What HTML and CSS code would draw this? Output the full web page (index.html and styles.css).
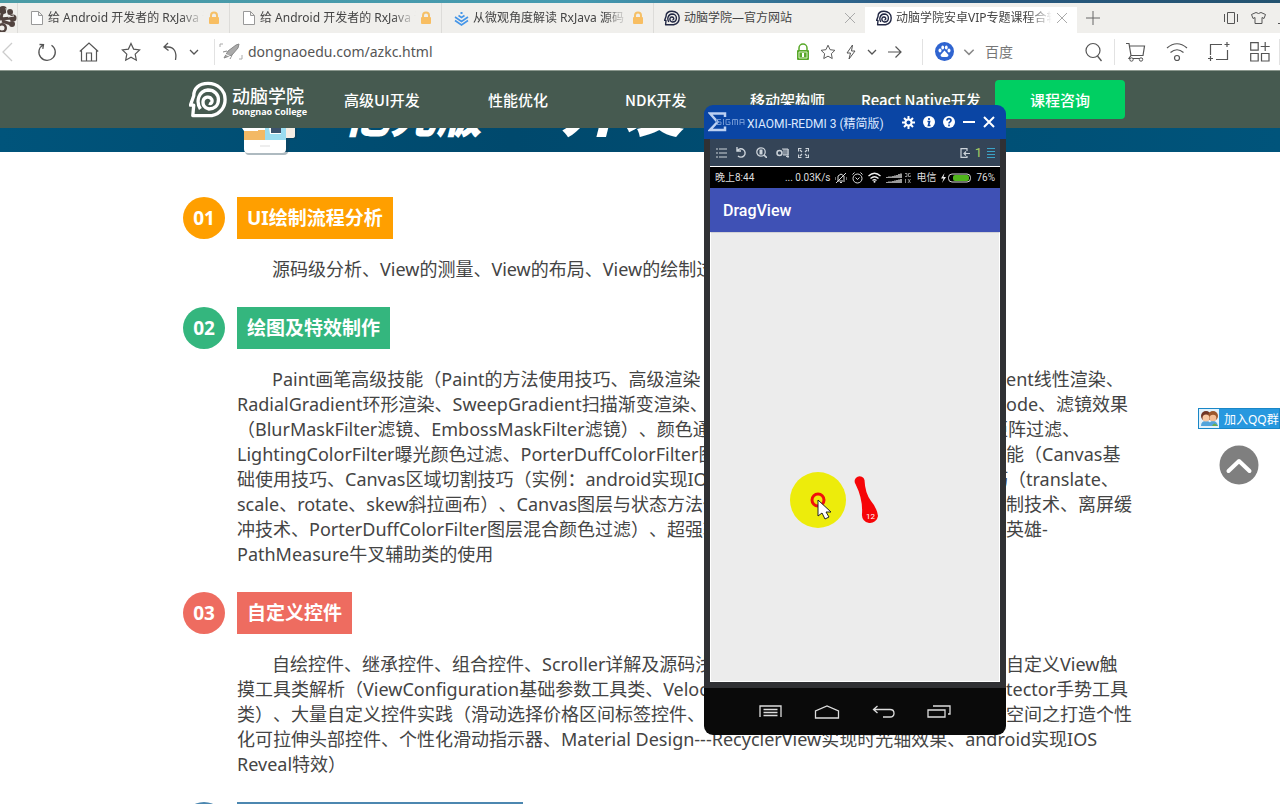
FILE: index.html
```html
<!DOCTYPE html>
<html lang="zh-CN">
<head>
<meta charset="utf-8">
<title>动脑学院安卓VIP专题课程合辑</title>
<link rel="stylesheet" href="styles.css">
</head>
<body>
<svg class="defs" aria-hidden="true">
  <symbol id="page" viewBox="0 0 14 16"><path d="M1.500 1.500h7l4 4v9h-11z M8.500 1.500v4h4" fill="#fff" stroke="#999"/></symbol>
  <symbol id="lock" viewBox="0 0 12 14"><path d="M3 7V4.500a3 3 0 0 1 6 0V7" fill="none" stroke="#f5c067" stroke-width="2"/><rect x="1" y="6" width="10" height="7" rx="1" fill="#f8be62"/></symbol>
  <symbol id="head" viewBox="0 0 40 38"><path d="M4 36h20c9-2 14-9 14-17C38 9 30 2 20 2 10 2 5 8 5 15L1.500 25h3.500zM12 29c-5-8-2-19 8-20 7 0 11 5 11 10 0 7-5 10-10 10-5-1-7-5-6-9 1-4 7-5 9-1 1 3-1 5-3 4" fill="none" stroke="currentColor" stroke-width="3.500" stroke-linejoin="round"/></symbol>
  <symbol id="close" viewBox="0 0 12 12"><path d="M1 1l10 10M11 1L1 11" stroke="currentColor" fill="none"/></symbol>
  <symbol id="down" viewBox="0 0 12 8"><path d="M2 2l4 4 4-4" stroke="currentColor" fill="none" stroke-width="1.300"/></symbol>
  <symbol id="star" viewBox="0 0 20 20"><path d="M10 1.500l2.600 5.600 6 .8-4.400 4.200 1.100 6.100-5.300-3-5.300 3 1.100-6.100L1.400 7.900l6-.8z" fill="none" stroke="currentColor" stroke-width="1.200"/></symbol>
</svg>

<div class="desktop-strip"></div>
<header class="browser">
  <div class="tabs">
    <svg class="clover" width="17" height="28" viewBox="0 0 17 28"><g fill="#51433f"><circle cx="3" cy="6" r="4"/><circle cx="10" cy="8" r="3"/><circle cx="13" cy="14" r="3.500"/><circle cx="12" cy="20" r="3"/><circle cx="2" cy="24" r="5"/></g><path d="M0 15l12-1M2 17l9 3M1 14l2-8" stroke="#51433f" stroke-width="3"/><circle cx="2" cy="24" r="2.500" fill="#f0efec"/><path d="M6 4l1 6-3 3M14 12l-6 1" stroke="#f0efec" fill="none"/></svg>
    <a class="tab" href="#"><svg width="14" height="16"><use href="#page"/></svg><span class="tab-title fade">给 Android 开发者的 RxJava 详解</span><svg width="12" height="14"><use href="#lock"/></svg></a>
    <a class="tab" href="#"><svg width="14" height="16"><use href="#page"/></svg><span class="tab-title fade">给 Android 开发者的 RxJava 详解</span><svg width="12" height="14"><use href="#lock"/></svg></a>
    <a class="tab" href="#"><svg width="15" height="15" viewBox="0 0 15 15"><path d="M1 6l6.500 4.500L14 6M1 9.500l6.500 4.500L14 9.500M4.500 4.500l3 2 3-2" fill="none" stroke="#4596e8" stroke-width="1.600"/><rect x="6.500" y="1" width="2" height="2" fill="#4596e8"/></svg><span class="tab-title fade">从微观角度解读 RxJava 源码</span><svg width="12" height="14"><use href="#lock"/></svg></a>
    <a class="tab" href="#"><svg class="navy" width="16" height="16"><use href="#head"/></svg><span class="tab-title">动脑学院—官方网站</span><svg class="x" width="12" height="12"><use href="#close"/></svg></a>
    <a class="tab active" href="#"><svg class="navy" width="16" height="16"><use href="#head"/></svg><span class="tab-title fade">动脑学院安卓VIP专题课程合辑</span><svg class="x" width="12" height="12"><use href="#close"/></svg></a>
    <button class="plain new-tab" aria-label="新建标签"><svg width="16" height="16" viewBox="0 0 16 16"><path d="M8 1v14M1 8h14" stroke="#666"/></svg></button>
    <div class="window-tools">
      <svg width="16" height="14" viewBox="0 0 16 14"><path d="M4.500 1.500h7v11h-7zM1.500 3v8M14.500 3v8" fill="none" stroke="#555"/></svg>
      <svg width="17" height="14" viewBox="0 0 17 14"><path d="M6 1.500q2.500 2 5 0l4.500 2-1.500 4-2-1v6H5v-6l-2 1-1.500-4z" fill="none" stroke="#555"/></svg>
      <svg width="2" height="14" viewBox="0 0 2 14"><path d="M0 12.500h2" stroke="#555"/></svg>
    </div>
  </div>
  <div class="toolbar">
    <button class="plain back" aria-label="后退"><svg width="14" height="20" viewBox="0 0 14 20"><path d="M12 1L3 10l9 9" fill="none" stroke="#ccc" stroke-width="1.300"/></svg></button>
    <button class="plain tool" aria-label="刷新"><svg width="20" height="20" viewBox="0 0 20 20"><path d="M6 3a8.200 8.200 0 1 0 8.500.2M2.500 2.500L6.500 2.700 5.800 6.800" fill="none" stroke="#555" stroke-width="1.300"/></svg></button>
    <button class="plain tool" aria-label="主页"><svg width="20" height="20" viewBox="0 0 20 20"><path d="M.8 9.500L10 1l9.200 8.500M2.500 8.500v10.500h15V8.500M7.500 19v-8h5v8" fill="none" stroke="#555" stroke-width="1.200"/></svg></button>
    <button class="plain tool" aria-label="收藏"><svg width="20" height="20"><use href="#star"/></svg></button>
    <button class="plain tool undo" aria-label="撤销"><svg width="15" height="20" viewBox="0 0 15 20"><path d="M5 1L1 5l4.500 3.500M1 5h4c6 0 9 5 7.500 13" fill="none" stroke="#555" stroke-width="1.300"/></svg></button>
    <button class="plain" aria-label="更多"><svg width="12" height="8"><use href="#down"/></svg></button>
    <i class="rule first"></i>
    <svg width="24" height="18" viewBox="0 0 24 18"><path d="M1 4V1h3M20 16h3v-4" fill="none" stroke="#aaa"/><path d="M5 15l4-7 8-6 3-1-1 4-6 7zM8 8l-4 1M13 12l-2 4" fill="#aaa" stroke="#888"/><path d="M6 11l6 3" stroke="#fff"/></svg>
    <input class="url" type="text" aria-label="网址" value="dongnaoedu.com/azkc.html">
    <div class="url-tools">
      <svg width="14" height="18" viewBox="0 0 14 18"><path d="M3 8V5a4 4 0 0 1 8 0v3" fill="none" stroke="#58a829" stroke-width="1.500"/><rect x="1" y="7" width="12" height="10" rx="1" fill="#58a829"/><path d="M3 9h8v6H3z" fill="none" stroke="#d5efbf"/><path d="M7 10v4" stroke="#fff" stroke-width="2"/></svg>
      <svg width="16" height="16"><use href="#star"/></svg>
      <svg width="10" height="16" viewBox="0 0 10 16"><path d="M6.500 1L1 9h3.500L3 15l6-8H5.500z" fill="none" stroke="#555"/></svg>
      <svg width="12" height="8"><use href="#down"/></svg>
      <svg width="14" height="14" viewBox="0 0 14 14"><path d="M0 7h13M7.500 1.500L13 7l-5.500 5.500" fill="none" stroke="#555" stroke-width="1.200"/></svg>
    </div>
    <i class="rule"></i>
    <svg class="baidu" width="19" height="19" viewBox="0 0 19 19"><circle cx="9.500" cy="9.500" r="9.500" fill="#2f64d0"/><g fill="#fff"><ellipse cx="5" cy="8.500" rx="1.500" ry="2"/><ellipse cx="7.700" cy="5.500" rx="1.400" ry="2"/><ellipse cx="11.300" cy="5.500" rx="1.400" ry="2"/><ellipse cx="14" cy="8.500" rx="1.500" ry="2"/><path d="M9.500 8.500l4 4.500q0 2-2 2h-4q-2 0-2-2z"/></g></svg>
    <svg class="grey" width="14" height="10"><use href="#down"/></svg>
    <input class="search" type="text" aria-label="搜索" placeholder="百度">
    <button class="plain" aria-label="搜索"><svg width="20" height="20" viewBox="0 0 20 20"><circle cx="9" cy="8.500" r="7" fill="none" stroke="#555" stroke-width="1.200"/><path d="M13.500 14l4 5" stroke="#555" stroke-width="1.300"/></svg></button>
    <i class="rule"></i>
    <div class="extras">
      <svg width="20" height="20" viewBox="0 0 20 20"><path d="M0 1.500h3l2 12h12l1.500-9.500H4M5 13.500l-2 3h14" fill="none" stroke="#555" stroke-width="1.200"/><circle cx="5.500" cy="17.500" r="1.700" fill="#fff" stroke="#555"/><circle cx="15" cy="17.500" r="1.700" fill="#fff" stroke="#555"/></svg>
      <svg width="22" height="20" viewBox="0 0 22 20"><path d="M1 6q10-8.500 20 0M4.500 10.500q6.500-5.500 13 0" fill="none" stroke="#555" stroke-width="1.200"/><circle cx="11" cy="16" r="2.500" fill="none" stroke="#555" stroke-width="1.200"/></svg>
      <svg width="22" height="20" viewBox="0 0 22 20"><path d="M2.500 13V2.500H14M19.500 8v9.500H8M16.500 2.500h5M19 0v5M0 16.500h5M2.500 14v5" fill="none" stroke="#555" stroke-width="1.200"/></svg>
      <svg width="20" height="20" viewBox="0 0 20 20"><path d="M.7.700h7.500v7.500H.7zM.7 11.500h7.500v7.500H.7zM11.500 11.500h7.500v7.500h-7.500zM15.200 0v9M10.700 4.500h9" fill="none" stroke="#555" stroke-width="1.200"/></svg>
    </div>
    <i class="rule"></i>
  </div>
</header>

<div class="page">
  <nav class="site-nav">
    <a class="logo" href="#"><svg width="38" height="37"><use href="#head"/></svg><span class="logo-text"><b>动脑学院</b><small>Dongnao College</small></span></a>
    <a class="n1" href="#">高级UI开发</a><a class="n2" href="#">性能优化</a><a class="n3" href="#">NDK开发</a><a class="n4" href="#">移动架构师</a><a class="n5" href="#">React Native开发</a>
    <button class="consult">课程咨询</button>
  </nav>
  <div class="banner">
    <svg width="60" height="28" viewBox="0 0 60 28"><path d="M3 3v20q0 4 4 4h35q4 0 5-5l1-11h7V0H3z" fill="#173a4a" opacity=".35"/><path d="M44 0h9v8q0 2-3 2h-6z" fill="#f6eee5"/><path d="M2 0h42v21q0 4-4 4H6q-4 0-4-4z" fill="#fff"/><path d="M2 2h21v10H2z" fill="#f3b965"/><path d="M23 0h21v12H23z" fill="#9bdcf0"/><path d="M0 0h16v3H2zM27 0h12v6H28z" fill="#fff"/><path d="M29 0h10v5H29z" fill="#3b526d"/><path d="M18 18h10" stroke="#ddd"/></svg>
    <b class="slogan">亿元版</b><b class="slogan">开发</b>
  </div>

  <main class="course">
    <section class="item orange">
      <span class="no">01</span><h2>UI绘制流程分析</h2>
      <p><span class="line indent"><span>源码级分析、View的测量、View的布局、View的绘制过程</span></span></p>
    </section>
    <section class="item green">
      <span class="no">02</span><h2>绘图及特效制作</h2>
      <p>
        <span class="line indent"><span>Paint画笔高级技能（Paint的方法使用技巧、高级渲染（Linear</span><span>ent线性渲染、</span></span>
        <span class="line"><span>RadialGradient环形渲染、SweepGradient扫描渐变渲染、Com</span><span>ode、滤镜效果</span></span>
        <span class="line early"><span>（BlurMaskFilter滤镜、EmbossMaskFilter滤镜）、颜色通道过滤</span><span>矩阵过滤、</span></span>
        <span class="line"><span>LightingColorFilter曝光颜色过滤、PorterDuffColorFilter图层</span><span>能（Canvas基</span></span>
        <span class="line early"><span>础使用技巧、Canvas区域切割技巧（实例：android实现IOS效果</span><span>巧（translate、</span></span>
        <span class="line"><span>scale、rotate、skew斜拉画布）、Canvas图层与状态方法使用</span><span>制技术、离屏缓</span></span>
        <span class="line"><span>冲技术、PorterDuffColorFilter图层混合颜色过滤）、超强辅助</span><span>英雄-</span></span>
        <span class="line">PathMeasure牛叉辅助类的使用</span>
      </p>
    </section>
    <section class="item red">
      <span class="no">03</span><h2>自定义控件</h2>
      <p>
        <span class="line indent"><span>自绘控件、继承控件、组合控件、Scroller详解及源码浅析</span><span>自定义View触</span></span>
        <span class="line"><span>摸工具类解析（ViewConfiguration基础参数工具类、Velocity</span><span>tector手势工具</span></span>
        <span class="line"><span>类）、大量自定义控件实践（滑动选择价格区间标签控件、热门</span><span>空间之打造个性</span></span>
        <span class="line">化可拉伸头部控件、个性化滑动指示器、Material Design---RecyclerView实现时光轴效果、android实现IOS</span>
        <span class="line">Reveal特效）</span>
      </p>
    </section>
    <section class="item blue"><span class="no">04</span><h2>动画框架与高级特效的实战开发</h2></section>
  </main>
</div>

<aside class="side">
  <a class="qq" href="#"><svg width="20" height="19" viewBox="0 0 20 19"><rect width="20" height="19" fill="#e4f2fb"/><path d="M2 17q0-5 5-5t5 5zM10 17q0-5 4-5t5 5z" fill="#53a4db"/><path d="M13 17q2-5 6 0z" fill="#69ad50"/><circle cx="7" cy="7" r="5" fill="#703626"/><circle cx="14" cy="7" r="5" fill="#9c572b"/><circle cx="7" cy="9" r="3.500" fill="#f8c9a5"/><circle cx="14" cy="9" r="3.300" fill="#f4be96"/></svg><span>加入QQ群</span></a>
  <button class="plain to-top" aria-label="返回顶部"><svg width="40" height="40" viewBox="0 0 40 40"><circle cx="20" cy="20" r="19.500" fill="#7f7f7f"/><path d="M9.500 26L20 16l10.500 10" fill="none" stroke="#fff" stroke-width="4" stroke-linecap="round" stroke-linejoin="round"/></svg></button>
</aside>

<div class="phone">
  <div class="phone-title">
    <svg width="37" height="20" viewBox="0 0 37 20"><path d="M17 5V1.500H2L9.500 10 2 18h15v-3.500" fill="none" stroke="#bcd0f2" stroke-width="2.500"/><path d="M13 7.500H8.500V10H13v2.500H8.500M15.500 7v6M22 7.500h-4v5h4V10h-2M24.500 13V7.500h5V13M27 7.500V13M32 13V7.500h4V13M32 10.500h4" fill="none" stroke="#6f96d4"/></svg>
    <span>XIAOMI-REDMI 3 (精简版)</span>
    <div class="phone-actions">
      <svg width="13" height="13" viewBox="0 0 13 13"><path d="M6.500 0v13M0 6.500h13M2 2l9 9M11 2l-9 9" stroke="#fff" stroke-width="2"/><circle cx="6.500" cy="6.500" r="4" fill="#fff"/><circle cx="6.500" cy="6.500" r="2" fill="#0a45a4"/></svg>
      <svg width="12" height="12" viewBox="0 0 12 12"><circle cx="6" cy="6" r="6" fill="#fff"/><path d="M6 2v2M4.500 5.500H6.500L5.500 9.500h2" fill="none" stroke="#0a45a4" stroke-width="1.700"/></svg>
      <svg width="12" height="12" viewBox="0 0 12 12"><circle cx="6" cy="6" r="6" fill="#fff"/><path d="M4 4.500c0-2.500 4-2.500 4 0C8 6 6 5.700 6 7.500M6 8.500v1.700" fill="none" stroke="#0a45a4" stroke-width="1.600"/></svg>
      <svg width="12" height="12" viewBox="0 0 12 12"><path d="M0 6h12" stroke="#fff" stroke-width="2"/></svg>
      <svg width="12" height="12" viewBox="0 0 12 12"><path d="M1 1l10 10M11 1L1 11" stroke="#fff" stroke-width="2"/></svg>
    </div>
  </div>
  <div class="phone-body">
    <div class="phone-tools">
      <svg width="11" height="10" viewBox="0 0 11 10"><path d="M3 1h8M3 5h8M3 9h8M0 1h2M0 5h2M0 9h2" stroke="#ccd3da" stroke-width="1.200"/></svg>
      <svg width="11" height="11" viewBox="0 0 11 11"><path d="M1 0v4h4M1.500 3.500A4.200 4.200 0 1 1 2 9" fill="none" stroke="#ccd3da" stroke-width="1.400"/></svg>
      <svg width="11" height="11" viewBox="0 0 11 11"><circle cx="5" cy="5" r="4.200" fill="none" stroke="#ccd3da" stroke-width="1.300"/><path d="M8 8l3 3" stroke="#ccd3da" stroke-width="1.600"/><path d="M3.500 2.500h3v5h-3z" fill="#ccd3da"/></svg>
      <svg width="13" height="10" viewBox="0 0 13 10"><circle cx="3.500" cy="5" r="2.500" fill="none" stroke="#ccd3da" stroke-width="1.500"/><path d="M6 1h6v6H7M8 1v6M10 1v6M10 8.500h3M12 1v9" fill="none" stroke="#ccd3da"/></svg>
      <svg width="11" height="10" viewBox="0 0 11 10"><path d="M.5 3.500v-3h3M7.500.5h3v3M10.500 6.500v3h-3M3.500 9.500h-3v-3M2 2l2 2M9 2L7 4M2 8l2-2M9 8L7 6" fill="none" stroke="#ccd3da" stroke-width="1.200"/></svg>
      <div class="tools-right"><svg width="10" height="10" viewBox="0 0 10 10"><path d="M7 3V.7H1v8.600h6V8M10 5.500H4M6 3.500L4 5.500l2 2" fill="none" stroke="#ccd3da" stroke-width="1.200"/></svg><b>1</b><svg width="8" height="10" viewBox="0 0 8 10"><path d="M0 .5h8M0 3.500h8M0 6.500h8M0 9.500h8" stroke="#3ba4c8"/></svg></div>
    </div>
    <div class="status">
      <span>晚上8:44</span>
      <div class="status-right">
        <span>... 0.03K/s</span>
        <svg width="12" height="12" viewBox="0 0 12 12"><path d="M3 8V4l3-2 3 2v4M2 9h8M5 10.500h2M1 11L11 1M0 5v3M12 5v3" fill="none" stroke="#ddd"/></svg>
        <svg width="11" height="12" viewBox="0 0 11 12"><circle cx="5.500" cy="6.500" r="4.500" fill="none" stroke="#ddd"/><path d="M.5 2.500l2-2M8.500.5l2 2M3.500 5.500l2 2 2-2" fill="none" stroke="#ddd"/></svg>
        <svg width="13" height="11" viewBox="0 0 13 11"><path d="M.5 4q6-5.500 12 0M2.500 6.500q4-3.500 8 0M4.500 8.500q2-1.700 4 0" fill="none" stroke="#eee" stroke-width="1.300"/><circle cx="6.500" cy="9.800" r="1" fill="#eee"/></svg>
        <svg width="25" height="10" viewBox="0 0 25 10"><path d="M1 5V4M3 5V3.500M5 5V3.500M7 5V3M9 5V2.500M11 5V2M13 5V1M15 5V.5M1 10V9M3 10V8.500M5 10V8.500M7 10V8M9 10V7.500M11 10V7M13 10V6.500M15 10V6" stroke="#eee" stroke-width="1.300"/><path d="M19 .5h2v3h-2M24.500.5h-2v3h2v-1M19.500 6v4M22 6l2.500 4M24.500 6L22 10" fill="none" stroke="#aaa" stroke-width=".8"/></svg>
        <span>电信</span>
        <svg width="30" height="10" viewBox="0 0 30 10"><path d="M3.500 0L0 5.500h2.500L1 10l4-6H2.500z" fill="#eee"/><rect x="7.500" y="1" width="22" height="8" rx="3.500" fill="none" stroke="#ddd"/><rect x="12" y="2" width="16" height="6" rx="2" fill="#50b51b"/></svg>
        <span>76%</span>
      </div>
    </div>
    <div class="appbar">DragView</div>
    <div class="canvas">
      <svg width="288" height="400" viewBox="0 0 288 400"><circle cx="107" cy="267" r="28" fill="#edec0b"/><circle cx="107" cy="267" r="6" fill="none" stroke="#f0100b" stroke-width="3"/><path d="M144.500 251Q152 266 151 281a8 8 0 0 0 16 2Q166 275 160 268 154 260 153.500 247a5 5 0 1 0-9 4z" fill="#f60508"/><text x="155" y="286" class="count">12</text><path d="M107 267v16l4-3 3 6 4-2-3-5h5z" fill="#fff" stroke="#222"/></svg>
    </div>
  </div>
  <div class="phone-keys">
    <svg width="23" height="13" viewBox="0 0 23 13"><path d="M1 12V1h21v11M4.500 4.500h14M4.500 7.500h14M4.500 10.500h14" fill="none" stroke="#ddd" stroke-width="1.300"/></svg>
    <svg width="26" height="14" viewBox="0 0 26 14"><path d="M1.500 13V6L13 1l11.500 5v7z" fill="none" stroke="#ddd" stroke-width="1.300"/></svg>
    <svg width="23" height="13" viewBox="0 0 23 13"><path d="M5.500 1L1.500 4.500l4 3.500M1.500 4.500H18q4 0 4 3.700T18 12h-7" fill="none" stroke="#ddd" stroke-width="1.300"/></svg>
    <svg width="24" height="13" viewBox="0 0 24 13"><path d="M1 5h17v7H1zM6 1h17v8h-2" fill="none" stroke="#ddd" stroke-width="1.300"/></svg>
  </div>
</div>
</body>
</html>
```
FILE: styles.css
```css
* { box-sizing: border-box; }
body {
  margin: 0;
  height: 100vh;
  display: flex;
  flex-direction: column;
  position: relative;
  overflow: hidden;
  background: #fff;
  color: #444;
  font-family: "Noto Sans", "Noto Sans CJK SC", sans-serif;
  text-spacing-trim: space-all;
}
a { color: inherit; text-decoration: none; }
svg { flex: none; display: block; }
.defs { position: absolute; width: 0; height: 0; }
.plain { border: 0; padding: 0; background: none; color: inherit; display: flex; align-items: center; justify-content: center; }

.desktop-strip { flex: none; height: 3px; background: linear-gradient(90deg, #4b9ba5, #459ab0 45%, #2a5b85 70%, #245370); }
.browser { flex: none; border-bottom: 1px solid #8b988e; }
.tabs { display: flex; height: 30px; background: #f0efec; }
.clover { align-self: center; }
.tab {
  flex: 0 0 212px;
  min-width: 0;
  display: flex;
  align-items: center;
  gap: 4px;
  padding: 0 9px 0 12px;
  border-left: 1px solid #dddcd9;
  font-size: 12px;
}
.tab .navy { margin-left: -2px; }
.tab.active { background: #fff; border: 0; margin-top: 4px; height: 26px; padding-left: 13px; padding-bottom: 4px; }
.tab-title { flex: 1; overflow: hidden; white-space: nowrap; line-height: 20px; }
.fade { -webkit-mask-image: linear-gradient(90deg, #000 85%, transparent); mask-image: linear-gradient(90deg, #000 85%, transparent); }
.navy { color: #222844; }
.x { color: #aaa; }
.new-tab { width: 32px; }
.window-tools { margin-left: auto; display: flex; align-items: center; gap: 11px; }

.toolbar { display: flex; align-items: center; height: 37px; background: #fff; color: #555; }
.back { width: 26px; justify-content: flex-start; }
.tool { width: 42px; height: 30px; }
.tool.undo { width: 36px; }
.rule { width: 1px; height: 26px; background: #e2e2e2; flex: none; }
.url, .search { min-width: 0; border: 0; outline: 0; background: none; padding: 0; font-family: inherit; font-size: 14px; color: #555; }
.url { flex: 1; margin-left: 5px; }
.url-tools { display: flex; align-items: center; gap: 10px; margin-right: 20px; }
.baidu { margin: 0 8px 0 12px; }
.grey { color: #888; margin-right: 9px; }
.search { width: 99px; }
.search::placeholder { color: #777; opacity: 1; }
.toolbar > .plain + .rule { margin-left: 10px; }
.toolbar > .plain + .rule.first { margin: 0 4px 0 14px; }
.extras { display: flex; gap: 20px; margin: 0 9px 0 11px; }

.page { flex: 1; min-height: 0; overflow: hidden; }
.site-nav { height: 57px; display: flex; align-items: center; padding-left: 189px; background: #465a50; color: #fff; font: 500 15px/20px "Noto Sans CJK SC", sans-serif; white-space: nowrap; }
.logo { display: flex; align-items: center; gap: 5px; width: 155px; }
.logo-text { display: flex; flex-direction: column; font-family: "Open Sans", "Noto Sans CJK SC", sans-serif; }
.logo-text b { font-size: 18px; line-height: 20px; padding-top: 5px; font-weight: 500; }
.logo-text small { font-size: 9px; line-height: 12px; font-weight: 700; }
.n1 { width: 144px; }
.n2 { width: 137px; }
.n3 { width: 125px; }
.n4 { width: 111px; }
.n5 { width: 134px; }
.consult { width: 130px; height: 39px; border: 0; border-radius: 4px; background: #00cf62; color: #fff; font: inherit; }
.banner { height: 24px; display: flex; padding-left: 242px; background: linear-gradient(90deg, #00547b, #00496d 40%, #00547b); }
.banner svg { margin-right: 42px; }
.slogan { height: 10px; overflow: hidden; display: flex; align-items: flex-end; color: #fff; font: italic 900 62px/68px "Noto Sans CJK SC", sans-serif; }
.slogan:nth-of-type(1) { width: 216px; font-size: 46px; line-height: 50px; }

.course { padding: 45px 140px 0 183px; }
.item { display: grid; grid-template-columns: 54px 1fr; margin-bottom: 25px; }
.no { width: 42px; height: 42px; border-radius: 50%; background: var(--tone); color: #fff; font-weight: 700; font-size: 19px; line-height: 42px; text-align: center; }
.item h2 { margin: 0; justify-self: start; padding: 0 10px; background: var(--tone); color: #fff; font-weight: 700; font-size: 19px; line-height: 42px; height: 42px; white-space: nowrap; }
.item p { grid-column: 2; margin: 18px 0 0; font-size: 18px; }
.line { display: grid; grid-template-columns: 769px auto; line-height: 25px; height: 25px; white-space: nowrap; }
.early { grid-template-columns: 753px auto; }
.indent > span:first-child { padding-left: 35px; }
.orange { --tone: #ff9f00; }
.green { --tone: #34b67e; }
.red { --tone: #ee6c60; }
.blue { --tone: #4c87b0; }

.side { position: absolute; right: 0; top: 408px; display: flex; flex-direction: column; gap: 16px; }
.qq { display: flex; align-items: center; width: 82px; height: 21px; overflow: hidden; border: 1px solid #1987c7; background: #2798df; color: #fff; font-size: 12px; white-space: nowrap; gap: 5px; }
.to-top { width: 40px; margin-left: 21px; }

.phone { position: absolute; left: 704px; top: 105px; width: 302px; border-radius: 9px; overflow: hidden; font-family: Roboto, "Noto Sans CJK SC", sans-serif; }
.phone-title { height: 34px; display: flex; align-items: center; gap: 2px; padding: 0 11px 0 4px; background: #0a45a4; color: #dce8ff; font-size: 12px; white-space: nowrap; }
.phone-actions { display: flex; align-items: center; gap: 8px; margin-left: auto; }
.phone-body { padding: 0 6px 6px; background: #303134; }
.phone-tools { height: 28px; display: flex; align-items: center; gap: 9px; padding: 0 5px 0 6px; background: #344457; border-bottom: 1px solid #fff; }
.tools-right { display: flex; align-items: center; gap: 5px; margin-left: auto; color: #a9cf65; font-size: 13px; line-height: 16px; }
.tools-right b { font-weight: 400; }
.status { height: 21px; display: flex; align-items: center; padding: 0 5px; background: #000; color: #ddd; font-size: 10px; line-height: 14px; white-space: nowrap; }
.status-right { display: flex; align-items: center; gap: 5px; margin-left: auto; }
.appbar { height: 44px; padding-left: 13px; background: #3f51b5; color: #fff; font-weight: 500; font-size: 16px; line-height: 45px; }
.canvas { height: 450px; background: #ececec; border: 1px solid #fff; border-top-color: #d2d2d6; }
.count { fill: #fff; font-size: 8px; }
.phone-keys { height: 47px; display: flex; align-items: center; justify-content: center; gap: 32px; background: #0a0a0a; }
```
